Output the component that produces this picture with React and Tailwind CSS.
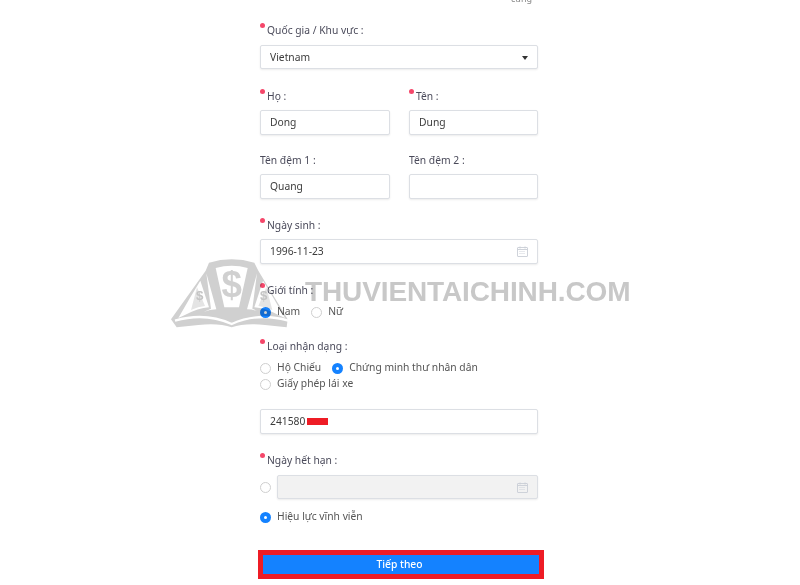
const font = { fontFamily: '"Noto Sans", sans-serif' };

function Label({ children, required, className = "" }) {
  return (
    <div className={`relative h-[18px] text-[10.3px] leading-[18px] text-[#4a4a5a] ${className}`}>
      {required && <span className="absolute left-0 top-[2px] h-[5px] w-[5px] rounded-full bg-[#f5476a]" />}
      <span className={required ? "ml-[7px]" : ""}>{children}</span>
    </div>
  );
}

function CalendarIcon() {
  return (
    <svg width="11" height="11" viewBox="0 0 11 11" fill="none" stroke="#c9ced6" strokeWidth="0.9">
      <rect x="0.5" y="1.5" width="10" height="9" rx="0.5" />
      <path d="M0.5 3.5h10M3 0.5v2M8 0.5v2" />
      <path d="M2.5 5.5h6M2.5 7.5h6" strokeDasharray="1 1" />
    </svg>
  );
}

function Field({ value, children, className = "", disabled }) {
  return (
    <div className={`flex h-[25px] items-center justify-between rounded-[2px] border border-[#dcdfe4] pl-[9px] pr-[9px] text-[10.3px] text-[#3c3c3c] shadow-[0_1px_2px_rgba(0,0,0,0.08)] ${disabled ? "bg-[#f2f2f2]" : "bg-white"} ${className}`}>
      <span>{value}</span>
      {children}
    </div>
  );
}

function Radio({ checked }) {
  return checked ? (
    <span className="flex h-[11px] w-[11px] shrink-0 items-center justify-center rounded-full bg-[#1482ff]">
      <span className="h-[3px] w-[3px] rounded-full bg-white" />
    </span>
  ) : (
    <span className="h-[11px] w-[11px] shrink-0 rounded-full border border-[#cfcfcf] bg-white" />
  );
}

function Option({ checked, label, className = "" }) {
  return (
    <div className={`flex h-[16px] items-center gap-[6px] text-[10.3px] text-[#555] ${className}`}>
      <Radio checked={checked} />
      <span>{label}</span>
    </div>
  );
}

// logo + site name stamped over the whole screenshot
function Watermark() {
  return (
    <div className="pointer-events-none absolute left-[165px] top-[250px] flex items-start mix-blend-multiply">
      <svg width="140" height="85" viewBox="0 0 420 255">
        <path d="M18 208 L122 62 L132 38 Q200 18 268 38 L280 62 L368 208 L365 232 L300 225 Q240 218 200 232 Q160 218 100 225 L35 232 Z" fill="#d0d0d0" />
        <path d="M152 54 Q200 40 248 54 L222 172 L178 172 Z" fill="#fff" />
        <path d="M124 70 L154 178 Q134 178 116 186 L138 176 Z" fill="#fff" />
        <path d="M276 70 L246 178 Q266 178 284 186 L262 176 Z" fill="#fff" />
        <path d="M76 142 L106 92 L132 172 Q100 174 58 196 L40 204 Z" fill="#fff" />
        <path d="M324 142 L294 92 L268 172 Q300 174 342 196 L360 204 Z" fill="#fff" />
        <path d="M96 112 L120 168 Q100 170 78 180 Z" fill="#e4e4e4" />
        <path d="M304 112 L280 168 Q300 170 322 180 Z" fill="#e4e4e4" />
        <path d="M30 212 Q120 186 200 222 Q280 186 370 212" fill="none" stroke="#fff" strokeWidth="7" />
        <text x="200" y="140" textAnchor="middle" fontSize="110" fontWeight="700" fill="#d0d0d0" fontFamily="Liberation Sans, sans-serif">$</text>
        <text x="104" y="150" textAnchor="middle" fontSize="40" fontWeight="700" fill="#c4c4c4" fontFamily="Liberation Sans, sans-serif">$</text>
        <text x="296" y="150" textAnchor="middle" fontSize="40" fontWeight="700" fill="#c4c4c4" fontFamily="Liberation Sans, sans-serif">$</text>
      </svg>
      <span className="mt-[26px] text-[28px] font-bold leading-[32px] tracking-[-0.12px] text-[#c8c8c8]" style={{ fontFamily: '"Liberation Sans", sans-serif' }}>
        THUVIENTAICHINH.COM
      </span>
    </div>
  );
}

export default function App() {
  return (
    <div className="relative h-[585px] w-[800px] overflow-hidden bg-white" style={font}>
      <div className="absolute right-[268px] top-[-8px] text-[9px] leading-[14px] text-[#888]">cùng</div>
      <div className="ml-[260px] flex w-[278px] flex-col pt-[21px]">
        <Label required>Quốc gia / Khu vực :</Label>
        <Field value="Vietnam" className="mt-[6px] !h-[24px] pt-[1px]">
          <span className="h-0 w-0 border-x-[3.5px] border-t-[4px] border-x-transparent border-t-[#333]" />
        </Field>

        <div className="mt-[18px] grid grid-cols-[130px_129px] gap-x-[19px] gap-y-[16px]">
          <div>
            <Label required>Họ :</Label>
            <Field value="Dong" className="mt-[5px]" />
          </div>
          <div>
            <Label required>Tên :</Label>
            <Field value="Dung" className="mt-[5px]" />
          </div>
          <div>
            <Label>Tên đệm 1 :</Label>
            <Field value="Quang" className="mt-[5px]" />
          </div>
          <div>
            <Label>Tên đệm 2 :</Label>
            <Field value="" className="mt-[5px]" />
          </div>
        </div>

        <Label required className="mt-[17px]">Ngày sinh :</Label>
        <Field value="1996-11-23" className="mt-[5px]">
          <CalendarIcon />
        </Field>

        <Label required className="mt-[17px]">Giới tính :</Label>
        <div className="mt-[5px] flex gap-[11px]">
          <Option checked label="Nam" />
          <Option label="Nữ" />
        </div>

        <Label required className="mt-[17px]">Loại nhận dạng :</Label>
        <div className="mt-[5px] flex gap-[11px]">
          <Option label="Hộ Chiếu" />
          <Option checked label="Chứng minh thư nhân dân" />
        </div>
        <Option label="Giấy phép lái xe" />

        <Field className="mt-[17px]" value={
          <span className="flex items-center">241580<span className="ml-[2px] h-[7px] w-[21px] bg-[#ee1c25]" /></span>
        } />

        <Label required className="mt-[17px]">Ngày hết hạn :</Label>
        <div className="mt-[6px] flex items-center gap-[6px]">
          <Radio />
          <Field value="" disabled className="flex-1 !h-[24px]">
            <CalendarIcon />
          </Field>
        </div>
        <Option checked label="Hiệu lực vĩnh viễn" className="mt-[10px]" />

        <div className="-ml-[2px] mt-[25px] w-[286px] border-[5px] border-[#ee1c25]">
          <button className="flex h-[19px] w-full items-center justify-center bg-[#1482ff] pr-[3px] text-[10.3px] font-medium text-white">
            Tiếp theo
          </button>
        </div>
      </div>
      <Watermark />
    </div>
  );
}
